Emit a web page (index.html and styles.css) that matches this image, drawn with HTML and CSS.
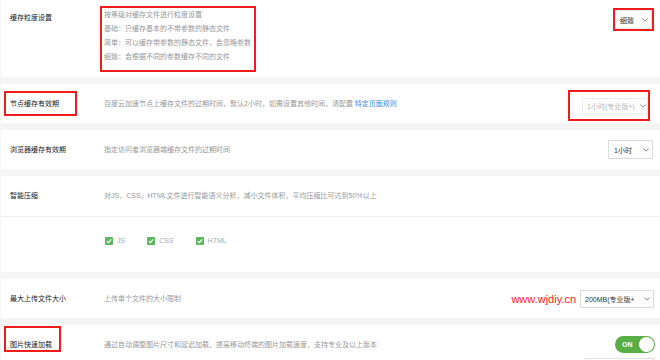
FILE: index.html
```html
<!DOCTYPE html>
<html lang="zh-CN">
<head>
    <meta charset="UTF-8">
    <meta name="viewport" content="width=device-width, initial-scale=1.0">
    <title>缓存设置</title>
    <link rel="stylesheet" href="styles.css">
</head>
<body>
    <div class="page">
        <!-- 缓存粒度 -->
        <div class="card">
            <div class="row row-grain">
                <div class="label label-grain">缓存粒度设置</div>
                <div class="desc mark mark-desc">
                    <p>按等级对缓存文件进行粒度设置</p>
                    <p>基础：只缓存基本的不带参数的静态文件</p>
                    <p>简单：可以缓存带参数的静态文件，会忽略参数</p>
                    <p>细致：会根据不同的参数缓存不同的文件</p>
                </div>
                <div class="control control-grain">
                    <div class="mark mark-select">
                        <div class="select select-grain">
                            <span>细致</span>
                            <svg class="chevron" width="6" height="4" viewBox="0 0 6 4"><path d="M0.5 0.5 L3 3.2 L5.5 0.5" /></svg>
                        </div>
                    </div>
                </div>
            </div>
        </div>

        <!-- 节点缓存 -->
        <div class="card">
            <div class="row">
                <div class="label label-marked">
                    <div class="mark mark-label">节点缓存有效期</div>
                </div>
                <div class="desc">百度云加速节点上缓存文件的过期时间，默认2小时，如需设置其他时间，请配置 <a href="#" class="link">特定页面规则</a></div>
                <div class="control">
                    <div class="mark mark-node">
                        <div class="select select-disabled">
                            <span>1小时(专业版+)</span>
                            <svg class="chevron" width="6" height="4" viewBox="0 0 6 4"><path d="M0.5 0.5 L3 3.2 L5.5 0.5" /></svg>
                        </div>
                    </div>
                </div>
            </div>
        </div>

        <!-- 浏览器缓存 -->
        <div class="card">
            <div class="row">
                <div class="label">浏览器缓存有效期</div>
                <div class="desc">指定访问者浏览器端缓存文件的过期时间</div>
                <div class="control">
                    <div class="select select-browser">
                        <span>1小时</span>
                        <svg class="chevron" width="6" height="4" viewBox="0 0 6 4"><path d="M0.5 0.5 L3 3.2 L5.5 0.5" /></svg>
                    </div>
                </div>
            </div>
        </div>

        <!-- 智能压缩 -->
        <div class="card">
            <div class="row row-top">
                <div class="label">智能压缩</div>
                <div class="desc">对JS，CSS，HTML文件进行智能语义分析，减小文件体积，平均压缩比可达到50%以上</div>
            </div>
            <div class="row row-options">
                <label class="opt">
                    <span class="checkbox"><svg width="8" height="8" viewBox="0 0 8 8"><path d="M1.8 4.1 L3.4 5.6 L6.3 2.4" /></svg></span>
                    <span>JS</span>
                </label>
                <label class="opt">
                    <span class="checkbox"><svg width="8" height="8" viewBox="0 0 8 8"><path d="M1.8 4.1 L3.4 5.6 L6.3 2.4" /></svg></span>
                    <span>CSS</span>
                </label>
                <label class="opt">
                    <span class="checkbox"><svg width="8" height="8" viewBox="0 0 8 8"><path d="M1.8 4.1 L3.4 5.6 L6.3 2.4" /></svg></span>
                    <span>HTML</span>
                </label>
            </div>
        </div>

        <!-- 上传大小 -->
        <div class="card">
            <div class="row">
                <div class="label">最大上传文件大小</div>
                <div class="desc">上传单个文件的大小限制</div>
                <div class="control">
                    <span class="brand">www.wjdiy.cn</span>
                    <div class="select select-upload">
                        <span>200MB(专业版+</span>
                        <svg class="chevron" width="6" height="4" viewBox="0 0 6 4"><path d="M0.5 0.5 L3 3.2 L5.5 0.5" /></svg>
                    </div>
                </div>
            </div>
        </div>

        <!-- 图片加载 -->
        <div class="card">
            <div class="row row-image">
                <div class="label label-marked">
                    <div class="mark mark-image">图片快速加载</div>
                </div>
                <div class="desc desc-image">通过自动调整图片尺寸和延迟加载，提高移动终端的图片加载速度，支持专业及以上版本</div>
                <div class="control control-image">
                    <div class="toggle">
                        <span class="toggle-text">ON</span>
                        <span class="knob"></span>
                    </div>
                    <div class="select select-next"></div>
                </div>
            </div>
        </div>
    </div>
</body>
</html>
```

FILE: styles.css
```css
html, body {
    margin: 0;
    padding: 0;
    height: 100%;
    overflow: hidden;
}

body {
    background: #f5f5f5;
    font-family: "Liberation Sans", "Noto Sans CJK SC", sans-serif;
    font-size: 7px;
    color: #333;
}

.page {
    padding-left: 1px;
}

.card {
    background: #fff;
    margin-bottom: 7px;
}

.row {
    display: flex;
    align-items: center;
    height: 39px;
    padding-right: 6px;
    box-sizing: border-box;
}

.label {
    width: 103px;
    flex-shrink: 0;
    padding-left: 9px;
    box-sizing: border-box;
    color: #222;
    line-height: 10px;
    white-space: nowrap;
}

.desc {
    flex: 1;
    color: #999;
    line-height: 10px;
    white-space: nowrap;
}

.desc p {
    margin: 0;
}

.link {
    color: #3b8be0;
    text-decoration: none;
}

.control {
    margin-left: auto;
    display: flex;
    align-items: center;
}

/* red annotation boxes */
.mark {
    border: 2px solid #f01c1c;
    box-sizing: border-box;
}

/* select */
.select {
    display: flex;
    align-items: center;
    justify-content: space-between;
    height: 19px;
    padding: 0 3px 0 4px;
    border: 1px solid #dcdcdc;
    background: #fff;
    box-sizing: border-box;
    color: #333;
    white-space: nowrap;
}

.chevron path {
    fill: none;
    stroke: #777;
    stroke-width: 0.9;
}

/* card 1 */
.row-grain {
    height: 77px;
    align-items: flex-start;
    padding-top: 6px;
}

.label-grain {
    margin-top: 5px;
    line-height: 14px;
}

.mark-desc {
    flex: none;
    width: 156px;
    margin-left: -4px;
    padding: 0 2px 6px 2px;
    line-height: 14px;
}

.control-grain {
    margin-top: 2px;
}

.mark-select {
    width: 41px;
    height: 23px;
}

.select-grain {
    width: 100%;
    border-color: #eee;
}

/* card 2 */
.label-marked {
    padding-left: 3px;
}

.mark-label {
    width: 73px;
    height: 25px;
    padding-left: 4px;
    display: flex;
    align-items: center;
}

.mark-node {
    width: 82px;
    height: 31px;
    margin-top: 4px;
    margin-right: 4px;
    padding-left: 12px;
    display: flex;
    align-items: center;
}

.select-disabled {
    flex: 1;
    height: 16px;
    color: #b5b5b5;
    border-color: #ececec;
    padding-right: 1px;
}

/* card 3 */
.select-browser {
    width: 45px;
    margin-right: 1px;
    padding-left: 5px;
}

/* card 4 */
.row-top {
    height: 41px;
    border-bottom: 1px solid #eee;
}

.row-options {
    height: 55px;
    align-items: flex-start;
    padding-top: 20px;
    padding-left: 104px;
}

.opt {
    display: flex;
    align-items: center;
    margin-right: 22px;
    color: #aaa;
    line-height: 8px;
}

.checkbox {
    width: 8px;
    height: 8px;
    margin-right: 4px;
    background: #5cb85c;
    border-radius: 1px;
    display: flex;
}

.checkbox path {
    fill: none;
    stroke: #fff;
    stroke-width: 1.2;
}

/* card 5 */
.brand {
    margin-right: 4px;
    font-size: 11px;
    color: #ff2222;
}

.select-upload {
    width: 74px;
    height: 18px;
    padding-left: 4px;
}

/* card 6 */
.row-image {
    height: 45px;
    align-items: flex-start;
    overflow: hidden;
}

.mark-image {
    width: 57px;
    height: 26px;
    margin-top: 1px;
    padding: 12px 0 0 4px;
}

.desc-image {
    margin-top: 15px;
}

.control-image {
    flex-direction: column;
    align-items: flex-end;
    margin-top: 11px;
    margin-right: -1px;
}

.toggle {
    width: 40px;
    height: 17px;
    border-radius: 9px;
    background: #58ad45;
    display: flex;
    align-items: center;
    justify-content: space-between;
    padding: 0 1px 0 7px;
    box-sizing: border-box;
}

.toggle-text {
    color: #fff;
    font-weight: bold;
    font-size: 7px;
}

.knob {
    width: 15px;
    height: 15px;
    border-radius: 50%;
    background: #fff;
}

.select-next {
    width: 70px;
    margin-top: 5px;
    border-color: #e2e2e2;
}
```
